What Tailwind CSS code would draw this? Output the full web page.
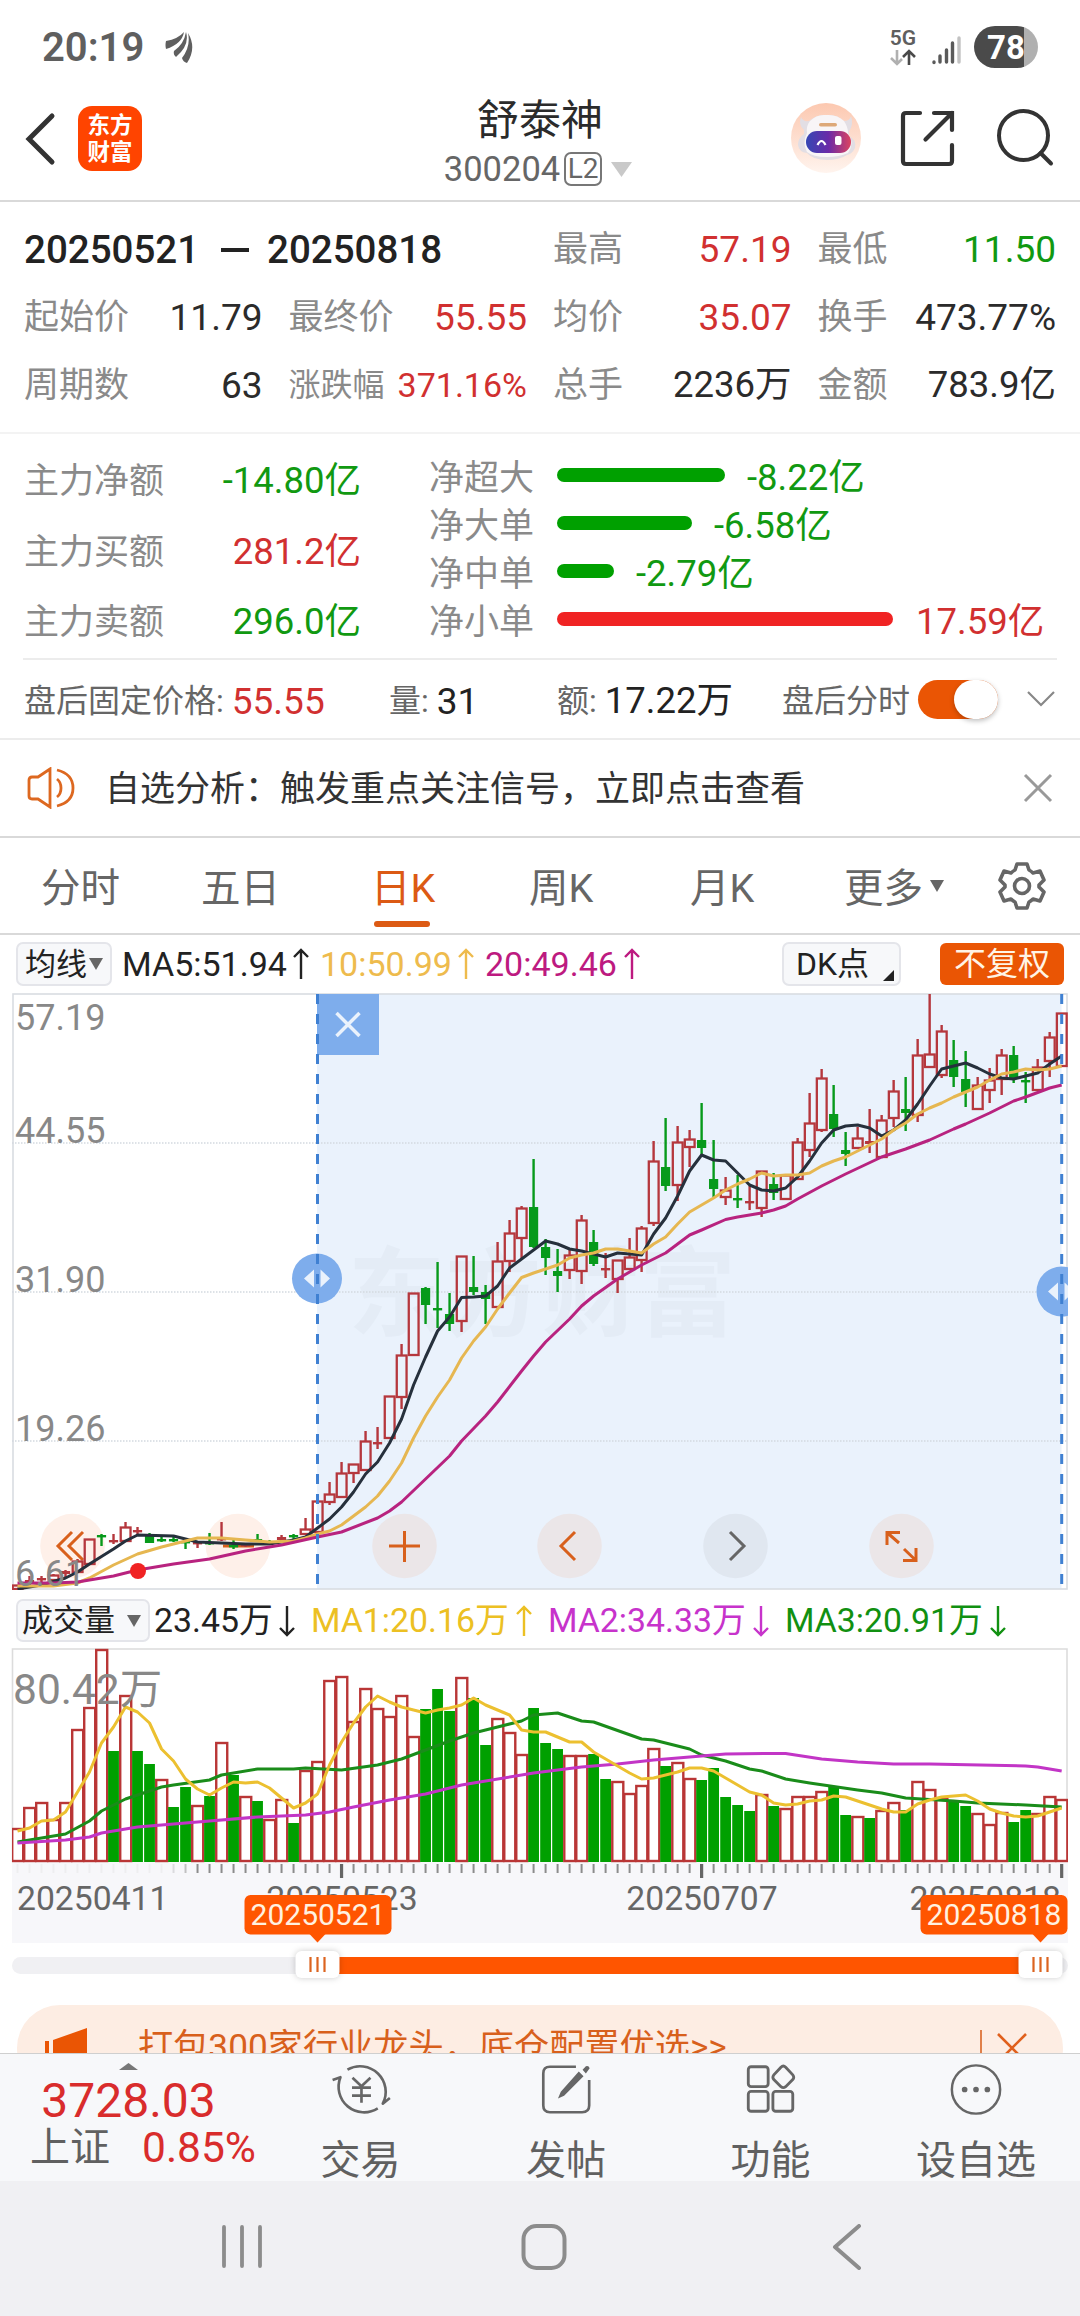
<!DOCTYPE html>
<html lang="zh-CN">
<head>
  <meta charset="UTF-8" />
  <meta name="viewport" content="width=device-width, initial-scale=1.0">
  <title>舒泰神 300204</title>
  <script src="https://cdn.jsdelivr.net/npm/@tailwindcss/browser@4"></script>
</head>
<body class="bg-white">
<div class="w-[1080px] h-[2316px] overflow-hidden flex flex-col bg-white text-[#2b2b2b] leading-none whitespace-nowrap font-[Roboto,'Noto_Sans_CJK_SC',sans-serif]">

  <!-- status bar -->
  <div class="h-[88px] shrink-0 flex items-center pl-[42px] pr-[42px] pt-[7px] text-[#5f5f5f]">
    <span class="text-[40px] font-semibold">20:19</span>
    <svg class="ml-[20px] w-[30px] h-[34px]" viewBox="0 0 30 34" fill="#5f5f5f"><path d="M2 10Q14 8 20 1Q18 13 2 18Q1 14 2 10ZM10 20Q20 13 22 1Q26 14 12 26Q9 24 10 20ZM18 27Q27 15 24 2Q33 17 23 32Q19 31 18 27Z"/></svg>
    <div class="ml-auto flex items-center">
      <div class="flex flex-col items-center w-[28px] -mt-[2px]">
        <span class="text-[21px] font-semibold">5G</span>
        <svg class="w-[28px] h-[17px]" viewBox="0 0 28 17" fill="none" stroke-width="2.600"><path d="M8 1V15M2 9L8 15L13 10" stroke="#b0b0b0"/><path d="M20 16V2M14 8L20 2L26 8" stroke="#4a4a4a"/></svg>
      </div>
      <svg class="ml-[14px] w-[30px] h-[30px] mt-[5px]" viewBox="0 0 30 30" stroke="#5a5a5a" stroke-width="3.400" stroke-linecap="round"><path d="M3 27V27.500M9 21V27M15.500 15V27M21.500 8V27"/><path d="M28 3V27" stroke="#c2c2c2"/></svg>
      <div class="ml-[13px] w-[64px] h-[42px] rounded-full flex items-center justify-center text-white text-[33px] font-bold bg-linear-to-r from-[#4a4a4a] from-78% to-[#b0b0b0] to-78% -mt-[1px]">78</div>
    </div>
  </div>

  <!-- title bar -->
  <div class="h-[114px] shrink-0 flex border-b-2 border-[#d9d9d9]">
    <div class="w-[400px] flex items-start pt-[18px] pl-[24px]">
      <svg class="w-[32px] h-[54px] mt-[6px]" viewBox="0 0 32 54" fill="none" stroke="#333" stroke-width="5" stroke-linecap="round"><path d="M28 4L5 27L28 50"/></svg>
      <div class="ml-[22px] w-[64px] h-[65px] rounded-[14px] bg-[#ff4400] text-white text-[22.500px] font-bold flex flex-col items-center justify-center gap-[5px]">
        <span>东方</span><span>财富</span>
      </div>
    </div>
    <div class="w-[280px] flex flex-col items-center pt-[12px]">
      <div class="text-[42px]">舒泰神</div>
      <div class="mt-[10px] flex items-center text-[34.500px] text-[#666] pr-[4px]">
        <span>300204</span>
        <span class="ml-[4px] w-[38px] h-[34px] rounded-[7px] border-2 border-[#777] text-[28px] flex items-center justify-center">L2</span>
        <svg class="ml-[9px] w-[21px] h-[15px]" viewBox="0 0 21 15"><path d="M0 0H21L10.500 15Z" fill="#c9c9c9"/></svg>
      </div>
    </div>
    <div class="w-[400px] flex items-start pt-[14px] pl-[111px]">
      <svg class="w-[70px] h-[70px] mt-px" viewBox="0 0 70 70">
        <defs>
          <linearGradient id="halo" x1="0" y1="0" x2="0" y2="1"><stop offset="0" stop-color="#fcc8b0"/><stop offset="1" stop-color="#fff4ee"/></linearGradient>
          <linearGradient id="visor"><stop offset="0" stop-color="#3547b4"/><stop offset=".5" stop-color="#6a2aa8"/><stop offset="1" stop-color="#dc4460"/></linearGradient>
        </defs>
        <circle cx="35" cy="35" r="35" fill="url(#halo)"/>
        <path d="M10 14Q12 19 18 18Q26 11 35 12Q46 11 53 18Q59 18 60 13Q63 22 58 28V33Q66 37 64 45Q61 51 56 52Q48 57 36 57Q22 57 16 50Q8 49 7 42Q7 35 13 31V27Q7 22 10 14Z" fill="#e2dee4"/>
        <path d="M19 18Q26 11 35 12Q46 11 53 18Q57 24 57 30Q64 40 57 50Q48 54 36 54Q22 54 16 49Q11 40 16 30Q15 23 19 18Z" fill="#f8f5f7"/>
        <rect x="28" y="20" width="18" height="3.600" rx="1.800" fill="#dda878"/>
        <rect x="15" y="28" width="45" height="22" rx="11" fill="url(#visor)"/>
        <path d="M26.500 42Q30.500 34 34.500 42" fill="none" stroke="#fff" stroke-width="2.200"/>
        <rect x="44" y="33" width="6.500" height="9" rx="2" fill="#fff"/>
      </svg>
      <svg class="ml-[38px] mt-[7px] w-[56px] h-[58px]" viewBox="0 0 56 58" fill="none" stroke="#333" stroke-width="4.200" stroke-linecap="round"><path d="M21 4H7Q4 4 4 7V52Q4 55 7 55H50Q53 55 53 52V36M35 4H53V21M53 4L26.500 30.500"/></svg>
      <svg class="ml-[41px] mt-[7px] w-[58px] h-[58px]" viewBox="0 0 58 58" fill="none" stroke="#333" stroke-width="4" stroke-linecap="round"><circle cx="27.500" cy="26.500" r="24.500"/><path d="M44.500 44L55 54.500"/></svg>
    </div>
  </div>

  <!-- range statistics -->
  <div class="h-[232px] shrink-0 border-b-2 border-[#f3f3f3] pl-[24px] pr-[24px] pt-[13px] grid grid-cols-4 grid-rows-[68px_68px_68px] content-start items-center gap-x-[26px] text-[35px] text-[#8a8a8a]">
    <div class="col-span-2 text-[38.500px] font-medium text-[#222] flex items-center pt-[2px]"><span>20250521</span><i class="w-[28px] h-[4px] bg-[#222] ml-[22px] mr-[18px]"></i><span>20250818</span></div>
    <div class="flex justify-between items-center"><span>最高</span><b class="font-normal text-[37px] text-[#d13030]">57.19</b></div>
    <div class="flex justify-between items-center"><span>最低</span><b class="font-normal text-[37px] text-[#119911]">11.50</b></div>
    <div class="flex justify-between items-center"><span>起始价</span><b class="font-normal text-[37px] text-[#2b2b2b]">11.79</b></div>
    <div class="flex justify-between items-center"><span>最终价</span><b class="font-normal text-[37px] text-[#d13030]">55.55</b></div>
    <div class="flex justify-between items-center"><span>均价</span><b class="font-normal text-[37px] text-[#d13030]">35.07</b></div>
    <div class="flex justify-between items-center"><span>换手</span><b class="font-normal text-[37px] text-[#2b2b2b]">473.77%</b></div>
    <div class="flex justify-between items-center"><span>周期数</span><b class="font-normal text-[37px] text-[#2b2b2b]">63</b></div>
    <div class="flex justify-between items-center"><span class="text-[32px]">涨跌幅</span><b class="font-normal text-[34px] text-[#d13030]">371.16%</b></div>
    <div class="flex justify-between items-center"><span>总手</span><b class="font-normal text-[36.500px] text-[#2b2b2b]">2236万</b></div>
    <div class="flex justify-between items-center"><span>金额</span><b class="font-normal text-[36.500px] text-[#2b2b2b]">783.9亿</b></div>
  </div>

  <!-- money flow -->
  <div class="h-[226px] shrink-0 mx-[23px] border-b-2 border-[#ececec] flex text-[35px] text-[#8a8a8a]">
    <div class="w-[338px] pl-px pt-[12px] flex flex-col">
      <div class="h-[71px] flex items-center justify-between"><span>主力净额</span><b class="font-normal text-[36.500px] text-[#119911]">-14.80亿</b></div>
      <div class="h-[71px] flex items-center justify-between"><span>主力买额</span><b class="font-normal text-[36.500px] text-[#d13030]">281.2亿</b></div>
      <div class="h-[71px] flex items-center justify-between"><span>主力卖额</span><b class="font-normal text-[36.500px] text-[#119911]">296.0亿</b></div>
    </div>
    <div class="ml-[68px] pt-[20px] flex flex-col">
      <div class="h-[48px] flex items-center"><span class="w-[128px]">净超大</span><i class="w-[168px] h-[14px] -mt-[7px] mr-[22px] rounded-full bg-[#00a000]"></i><b class="font-normal text-[36.500px] text-[#119911]">-8.22亿</b></div>
      <div class="h-[48px] flex items-center"><span class="w-[128px]">净大单</span><i class="w-[135px] h-[14px] -mt-[7px] mr-[22px] rounded-full bg-[#00a000]"></i><b class="font-normal text-[36.500px] text-[#119911]">-6.58亿</b></div>
      <div class="h-[48px] flex items-center"><span class="w-[128px]">净中单</span><i class="w-[57px] h-[14px] -mt-[7px] mr-[22px] rounded-full bg-[#00a000]"></i><b class="font-normal text-[36.500px] text-[#119911]">-2.79亿</b></div>
      <div class="h-[48px] flex items-center"><span class="w-[128px]">净小单</span><i class="w-[336px] h-[14px] -mt-[7px] mr-[23px] rounded-full bg-[#f02323]"></i><b class="font-normal text-[36.500px] text-[#d13030]">17.59亿</b></div>
    </div>
  </div>

  <!-- after-hours -->
  <div class="h-[80px] shrink-0 border-b-2 border-[#ececec] pl-[24px] flex items-center text-[32px] text-[#666]">
    <div class="w-[365px] pt-[4px] flex items-center gap-[8px]"><span>盘后固定价格:</span><b class="font-normal text-[37px] text-[#d13030]">55.55</b></div>
    <div class="w-[168px] pt-[4px] flex items-center gap-[8px]"><span>量:</span><b class="font-normal text-[37px] text-[#222]">31</b></div>
    <div class="w-[225px] pt-[4px] flex items-center gap-[8px]"><span>额:</span><b class="font-normal text-[36.500px] text-[#222]">17.22万</b></div>
    <span class="w-[136px] pt-[4px]">盘后分时</span>
    <div class="w-[80px] h-[39px] rounded-full bg-[#ea5504] flex justify-end"><i class="w-[44px] h-[39px] rounded-full bg-white shadow-[0_2px_5px_rgba(0,0,0,0.25)]"></i></div>
    <svg class="ml-[28px] w-[30px] h-[18px]" viewBox="0 0 30 18" fill="none" stroke="#888" stroke-width="2.200"><path d="M2 2L15 15L28 2"/></svg>
  </div>

  <!-- notice -->
  <div class="h-[98px] shrink-0 border-b-2 border-[#d9d9d9] pl-[26px] pr-[27px] flex items-center text-[35px] text-[#333]">
    <svg class="w-[50px] h-[42px]" viewBox="0 0 50 42" fill="none" stroke="#dd6820" stroke-width="2.800"><path d="M24 2L12 10H6Q3 10 3 13V29Q3 32 6 32H12L24 40ZM31 12Q35 15 35 21T31 30M31 3Q47 7 47 21T31 39"/></svg>
    <span class="ml-[29px] pt-[2px]">自选分析：触发重点关注信号，立即点击查看</span>
    <svg class="ml-auto w-[30px] h-[30px]" viewBox="0 0 30 30" stroke="#999" stroke-width="3"><path d="M2 2L28 28M28 2L2 28"/></svg>
  </div>

  <!-- period tabs -->
  <div class="h-[97px] shrink-0 border-b-2 border-[#d9d9d9] pl-[41px] flex items-center text-[39.500px] text-[#666]">
    <span class="w-[160px] pt-[7px]">分时</span>
    <span class="w-[170px] pt-[7px]">五日</span>
    <span class="w-[158px] h-full pt-[7px] flex items-center relative text-[#dc5a14]">日K<i class="absolute left-[3px] top-[83px] w-[56px] h-[6px] rounded-full bg-[#dc5a14]"></i></span>
    <span class="w-[161px] pt-[7px]">周K</span>
    <span class="w-[154px] pt-[7px]">月K</span>
    <span class="pt-[7px]">更多</span>
    <svg class="ml-[7px] w-[14px] h-[12px]" viewBox="0 0 14 12"><path d="M0 0H14L7 12Z" fill="#666"/></svg>
    <svg class="ml-[53px] w-[50px] h-[50px]" viewBox="0 0 50 50" fill="none" stroke="#666" stroke-width="3.600" stroke-linejoin="round"><path d="M20 3H30L32 9Q34 10 36 12L43 10L47 19L42 24V26L47 31L43 40L36 38Q34 40 32 41L30 47H20L18 41Q16 40 14 38L7 40L3 31L8 26V24L3 19L7 10L14 12Q16 10 18 9Z"/><circle cx="25" cy="25" r="7.500"/></svg>
  </div>

  <!-- moving averages legend -->
  <div class="h-[58px] shrink-0 pl-[16px] flex items-center text-[34px] text-[#222]">
    <div class="w-[96px] h-[44px] rounded-[7px] border-2 border-[#e4e5ea] bg-[#f7f8fa] flex items-center justify-center text-[31px]">均线<svg class="ml-[2px] w-[14px] h-[12px]" viewBox="0 0 14 12"><path d="M0 0H14L7 12Z" fill="#666"/></svg></div>
    <span class="ml-[10px] w-[170px]">MA5:51.94</span>
    <svg class="w-[18px] h-[32px]" viewBox="0 0 18 32" fill="none" stroke="#222" stroke-width="2.400"><path d="M9 31V2M2 9L9 2L16 9"/></svg>
    <span class="ml-[10px] w-[137px] text-[#eebb4d]">10:50.99</span>
    <svg class="w-[18px] h-[32px]" viewBox="0 0 18 32" fill="none" stroke="#eebb4d" stroke-width="2.400"><path d="M9 31V2M2 9L9 2L16 9"/></svg>
    <span class="ml-[10px] w-[138px] text-[#bd1a80]">20:49.46</span>
    <svg class="w-[18px] h-[32px]" viewBox="0 0 18 32" fill="none" stroke="#bd1a80" stroke-width="2.400"><path d="M9 31V2M2 9L9 2L16 9"/></svg>
    <div class="ml-[141px] w-[119px] h-[44px] rounded-[7px] border-2 border-[#e4e5ea] bg-[#f7f8fa] flex items-center pl-[12px] text-[32px]">DK点<svg class="ml-auto mr-[5px] mt-[22px] w-[11px] h-[11px]" viewBox="0 0 11 11"><path d="M11 0V11H0Z" fill="#222"/></svg></div>
    <div class="ml-[39px] w-[124px] h-[42px] rounded-[6px] bg-[#ea5504] text-[#fff4e6] text-[32px] flex items-center justify-center">不复权</div>
  </div>

  <!-- candlestick chart -->
  <svg id="kline" class="w-[1080px] h-[600px] shrink-0" viewBox="0 993 1080 600"></svg>

  <!-- volume legend -->
  <div class="h-[55px] shrink-0 pl-[16px] flex items-center text-[33.800px] text-[#222]">
    <div class="w-[134px] h-[43px] rounded-[7px] border-2 border-[#e4e5ea] bg-[#f7f8fa] flex items-center pl-[4px] text-[31px]">成交量<svg class="ml-[12px] w-[14px] h-[12px]" viewBox="0 0 14 12"><path d="M0 0H14L7 12Z" fill="#666"/></svg></div>
    <span class="ml-[4px] w-[124px]">23.45万</span>
    <svg class="w-[18px] h-[32px]" viewBox="0 0 18 32" fill="none" stroke="#222" stroke-width="2.400"><path d="M9 1V30M2 23L9 30L16 23"/></svg>
    <span class="ml-[15px] w-[204px] text-[#ecc023]">MA1:20.16万</span>
    <svg class="w-[18px] h-[32px]" viewBox="0 0 18 32" fill="none" stroke="#ecc023" stroke-width="2.400"><path d="M9 31V2M2 9L9 2L16 9"/></svg>
    <span class="ml-[15px] w-[204px] text-[#c733cb]">MA2:34.33万</span>
    <svg class="w-[18px] h-[32px]" viewBox="0 0 18 32" fill="none" stroke="#c733cb" stroke-width="2.400"><path d="M9 1V30M2 23L9 30L16 23"/></svg>
    <span class="ml-[15px] w-[204px] text-[#119011]">MA3:20.91万</span>
    <svg class="w-[18px] h-[32px]" viewBox="0 0 18 32" fill="none" stroke="#119011" stroke-width="2.400"><path d="M9 1V30M2 23L9 30L16 23"/></svg>
  </div>

  <!-- volume chart with time axis and range slider -->
  <svg id="volume" class="w-[1080px] h-[357px] shrink-0" viewBox="0 1648 1080 357"></svg>

  <!-- promo banner, cut by the bottom bar -->
  <div class="h-[48px] shrink-0 overflow-hidden px-[17px]">
    <div class="h-[86px] rounded-[43px] bg-[#fdede3] flex items-center pl-[27px] pr-[35px] text-[35.200px] text-[#d8601c]">
      <svg class="w-[44px] h-[44px] mt-[4px]" viewBox="0 0 44 44" fill="#ea5504"><path d="M1 13H5V32H1ZM9 12L43 0V44L9 32Z"/></svg>
      <span class="ml-[50px]">打包300家行业龙头，底仓配置优选&gt;&gt;</span>
      <i class="ml-auto w-[2px] h-[36px] bg-[#e0804a]"></i>
      <svg class="ml-[14px] w-[32px] h-[34px]" viewBox="0 0 32 34" stroke="#e0601c" stroke-width="2.600"><path d="M2 3L30 31M30 3L2 31"/></svg>
    </div>
  </div>

  <!-- bottom bar -->
  <div class="h-[128px] shrink-0 border-t border-[#cfcfcf] bg-[#f7f8fa] flex text-[40px] text-[#606060]">
    <div class="w-[257px] pt-[9px] flex flex-col items-center">
      <svg class="w-[19px] h-[7px]" viewBox="0 0 19 7"><path d="M0 7H19L9.500 0Z" fill="#777"/></svg>
      <div class="mt-[7px] text-[48px] text-[#d92c2c]">3728.03</div>
      <div class="mt-[2px] w-full pl-[30px] flex items-center">上证<span class="ml-[32px] text-[42.500px] text-[#d92c2c]">0.85%</span></div>
    </div>
    <div class="w-[207px] pt-[9px] flex flex-col items-center">
      <svg class="w-[62px] h-[56px]" viewBox="0 0 62 56" fill="none" stroke="#666" stroke-width="2.800" stroke-linejoin="round"><path d="M16.700 7A27 27 0 0 1 54 43L61.500 37M48.700 48A27 27 0 0 1 9.300 15L1 18"/><path d="M22 15.500L31.500 24.500L41 15.500M31.500 24.500V42M21.500 26H41.500M21.500 34.500H41.500"/></svg>
      <span class="mt-[25px]">交易</span>
    </div>
    <div class="w-[204px] pt-[9px] flex flex-col items-center">
      <svg class="w-[56px] h-[56px]" viewBox="0 0 56 56" fill="none" stroke="#666" stroke-width="2.800"><path d="M38.500 4H11Q4 4 4 11V45Q4 52 11 52H45Q52.500 52 52.500 45V18"/><path d="M41.500 9L46.500 14L26 34.500L19.500 37.500L22.500 30.500ZM45.500 7L49 3.500Q52 2.500 53 5.500L49 11Z" fill="#666" stroke="none"/></svg>
      <span class="mt-[25px]">发帖</span>
    </div>
    <div class="w-[205px] pt-[9px] flex flex-col items-center">
      <svg class="w-[56px] h-[56px]" viewBox="0 0 56 56" fill="none" stroke="#666" stroke-width="3"><rect x="4" y="4" width="21" height="21" rx="3"/><rect x="4" y="30" width="21" height="21" rx="3"/><rect x="30" y="30" width="21" height="21" rx="3"/><path d="M38.500 4.500Q41 2 43.500 4.500L51 12.500Q53 15 51 17.500L43.500 25Q41 27 38.500 25L31 17.500Q29 15 31 12.500Z"/></svg>
      <span class="mt-[25px]">功能</span>
    </div>
    <div class="w-[206px] pt-[9px] flex flex-col items-center">
      <svg class="w-[56px] h-[56px]" viewBox="0 0 56 56"><circle cx="28" cy="28" r="25.500" fill="none" stroke="#666" stroke-width="2.600"/><path d="M13 28a3 3 0 1 0 6 0a3 3 0 1 0 -6 0M25 28a3 3 0 1 0 6 0a3 3 0 1 0 -6 0M37 28a3 3 0 1 0 6 0a3 3 0 1 0 -6 0" fill="#666"/></svg>
      <span class="mt-[25px]">设自选</span>
    </div>
  </div>

  <!-- system navigation -->
  <div class="flex-1 bg-[#f0f0f3] flex items-start pt-[43px]">
    <svg class="ml-[221px] w-[42px] h-[46px]" viewBox="0 0 42 46" stroke="#8c8c8c" stroke-width="3.800" stroke-linecap="round"><path d="M3 3V42M21 3V42M39 3V42"/></svg>
    <svg class="ml-[258px] w-[46px] h-[46px]" viewBox="0 0 46 46" fill="none" stroke="#8c8c8c" stroke-width="4"><rect x="2.500" y="2" width="41" height="42" rx="13"/></svg>
    <svg class="ml-[264px] w-[32px] h-[46px]" viewBox="0 0 32 46" fill="none" stroke="#8c8c8c" stroke-width="4" stroke-linecap="round" stroke-linejoin="round"><path d="M28 2L4 23L28 44"/></svg>
  </div>
</div>

<script>
  const RED = "#b5373d", GREEN = "#079a1b";
  const x = i => 17.5 + 12.002 * i;

  // [up, bodyTop, bodyBottom, high, low]
  const candles = [
    [1,1585,1589,1585,1589],[1,1580,1583,1576,1586],[1,1578,1580,1576,1582],[1,1575,1580,1574,1580],[1,1571,1574,1570,1577],
    [1,1561,1572,1559,1573],[1,1539,1564,1539,1564],[0,1535,1537,1534,1546],[1,1540,1542,1534,1544],[1,1527,1541,1522,1541],
    [1,1530,1532,1527,1535],[0,1534,1543,1533,1543],[0,1539,1540,1537,1542],[0,1539,1540,1536,1542],[0,1541,1543,1540,1549],
    [1,1542,1543,1541,1548],[0,1542,1544,1533,1545],[1,1538,1539,1522,1541],[0,1545,1547,1540,1549],[1,1544,1546,1543,1547],
    [0,1539,1541,1534,1542],[0,1541,1543,1540,1545],[1,1537,1540,1535,1541],[0,1535,1537,1534,1540],[1,1529,1534,1518,1534],
    [1,1501,1532,1500,1534],[1,1494,1502,1482,1505],[1,1473,1497,1462,1498],[1,1464,1473,1464,1483],[1,1441,1470,1431,1471],
    [1,1442,1444,1427,1449],[1,1396,1438,1396,1438],[1,1355,1397,1344,1409],[1,1293,1355,1293,1355],[0,1288,1305,1287,1324],
    [0,1308,1309,1262,1328],[0,1314,1324,1293,1331],[1,1256,1321,1256,1332],[0,1287,1292,1256,1295],[0,1292,1299,1285,1324],
    [1,1261,1307,1242,1307],[1,1233,1261,1220,1272],[1,1208,1238,1206,1259],[0,1207,1247,1159,1248],[0,1247,1258,1239,1275],
    [0,1271,1276,1249,1292],[1,1255,1270,1249,1279],[1,1220,1271,1215,1284],[0,1242,1264,1230,1266],[1,1268,1269,1253,1278],
    [1,1260,1279,1260,1293],[1,1257,1269,1238,1269],[1,1228,1260,1226,1272],[1,1161,1223,1141,1226],[0,1167,1186,1118,1191],
    [1,1142,1185,1126,1201],[1,1139,1147,1130,1167],[0,1140,1148,1103,1155],[0,1179,1189,1140,1197],[1,1190,1197,1177,1205],
    [0,1198,1200,1175,1208],[1,1201,1202,1186,1210],[1,1171,1208,1171,1217],[0,1184,1193,1173,1200],[1,1175,1199,1175,1199],
    [1,1142,1179,1138,1179],[1,1123,1150,1093,1157],[1,1078,1130,1069,1132],[0,1114,1129,1085,1137],[0,1150,1154,1132,1166],
    [1,1138,1148,1127,1148],[1,1141,1144,1109,1153],[1,1120,1157,1115,1157],[1,1091,1118,1080,1127],[0,1109,1113,1077,1131],
    [1,1055,1115,1039,1122],[1,1054,1067,994,1067],[1,1031,1075,1025,1078],[0,1060,1077,1040,1087],[0,1079,1092,1051,1107],
    [1,1085,1109,1077,1109],[1,1080,1090,1068,1103],[1,1055,1079,1049,1095],[0,1055,1078,1046,1083],[0,1080,1082,1072,1103],
    [1,1067,1090,1059,1090],[1,1037,1061,1032,1077],[1,1013,1066,1013,1066]
  ];

  // [index, y] points of the averages
  const ma5 = [[0,1589],[2,1585],[4,1578],[5,1572],[6,1564],[8,1549],[9,1541],[10,1535],[13,1536],[15,1542],[19,1544],[21,1544],[23,1540],[24,1537],[25,1528],[26,1519],[27,1507],[28,1492],[29,1474],[30,1462],[31,1443],[32,1419],[33,1385],[34,1357],[35,1331],[36,1317],[37,1297.5],[38,1297],[39,1296],[40,1286],[41,1268],[42,1259],[43,1250],[44,1241],[45,1244],[46,1249],[47,1251],[48,1254],[49,1257],[50,1253],[51,1254],[52,1255],[53,1234],[54,1218],[55,1196],[56,1171],[57,1155],[58,1160],[59,1161],[60,1173],[61,1185],[62,1190],[63,1191],[64,1188],[65,1177],[66,1161],[67,1143],[68,1130],[69,1126],[70,1125],[71,1128],[72,1136],[73,1130],[74,1120],[75,1104],[76,1086],[77,1069],[78,1066],[79,1063],[80,1068],[81,1074],[82,1078],[83,1079],[84,1076],[85,1073],[86,1064],[87,1056]];
  const ma10 = [[0,1586],[3,1586],[5,1583],[6,1578],[8,1565],[10,1554],[12,1547],[13,1544],[15,1538],[17,1538],[19,1540],[21,1542],[23,1541],[24,1538],[25,1534],[26,1531],[27,1525],[28,1516],[29,1507],[30,1496],[31,1481],[32,1463],[33,1438],[34,1416],[35,1397],[36,1380],[37,1358],[38,1341],[39,1327],[40,1309],[41,1293],[42,1277.5],[43,1273],[44,1269],[45,1265],[46,1258],[47,1255],[48,1253],[49,1249],[50,1249],[51,1251],[52,1253],[53,1244],[54,1237],[55,1224],[56,1212],[57,1205],[58,1198],[59,1190],[60,1184],[61,1179],[62,1173],[63,1176],[64,1175],[65,1175],[66,1173],[67,1166],[68,1161],[69,1157],[70,1151],[71,1145],[72,1139],[73,1130],[74,1123],[75,1114],[76,1108],[77,1103],[78,1097],[79,1092],[80,1087],[81,1080],[82,1074],[83,1072],[84,1069],[85,1070],[86,1069],[87,1066]];
  const ma20 = [[0,1583],[3,1583],[5,1582],[8,1576],[10,1570],[13,1564],[16,1559],[19,1551],[22,1545],[25,1537],[27,1532],[30,1518],[31,1511],[32,1502],[34,1479],[36,1456],[37,1441],[39,1416],[40,1402],[42,1371],[43,1356],[44,1342],[46,1319],[47,1306],[48,1296],[50,1279],[52,1265],[54,1253],[55,1244],[56,1235],[57,1230],[59,1219.5],[60,1217],[62,1213],[63,1210],[64,1206],[65,1199],[67,1186],[69,1174],[72,1157],[74,1149],[76,1140],[78,1129],[79,1124],[81,1113],[83,1101],[84,1097],[86,1088],[87,1085]];

  // r = rising, g = falling, with the y of the bar's top
  const volumes = "r1829 r1808 r1803 r1820 r1803 r1730 r1708 r1650 g1751 r1696 g1751 g1764 r1780 g1807 g1787 r1806 g1796 r1743 g1775 r1797 g1801 r1820 r1800 g1823 r1771 r1762 r1681 r1677 r1722 r1689 r1709 r1717 r1696 r1737 g1709 g1689 g1711 r1678 g1698 g1745 r1719 r1733 r1755 g1708 g1743 g1749 r1756 r1756 g1754 g1779 r1782 r1794 r1786 r1749 g1766 r1763 r1779 g1780 g1768 g1797 g1805 g1811 r1795 g1806 r1809 r1797 r1797 r1792 g1786 g1815 r1817 g1818 r1811 r1803 g1810 r1782 r1790 r1799 g1800 g1806 r1814 r1825 r1813 g1822 g1810 r1814 r1797 r1800".split(" ");
  const vol1 = [[0,1831],[1,1828],[2,1821],[3,1820],[4,1812],[5,1792],[6,1772],[7,1743],[8,1727],[9,1707],[10,1712],[11,1723],[12,1749],[13,1761],[14,1779],[15,1789],[16,1795],[17,1788],[18,1782],[19,1783],[20,1782],[21,1788],[22,1798],[23,1808],[24,1803],[25,1794],[26,1765],[27,1742],[28,1723],[29,1707],[30,1696],[31,1702],[32,1707],[33,1710],[34,1713],[35,1710],[36,1708],[37,1705],[38,1698],[39,1705],[40,1710],[41,1715],[42,1730],[43,1732],[44,1732],[45,1737],[46,1742],[47,1742],[48,1752],[50,1766],[51,1773],[52,1779],[53,1778],[54,1775],[55,1772],[56,1768],[57,1768],[58,1771],[59,1778],[60,1785],[61,1792],[62,1795],[63,1803],[64,1805],[65,1804],[66,1801],[67,1800],[68,1796],[69,1797],[70,1801],[72,1809],[73,1812],[74,1812],[75,1804],[76,1800],[77,1797],[78,1796],[79,1795],[80,1801],[81,1809],[82,1813],[83,1816],[84,1817],[85,1816],[86,1812],[87,1808]];
  const vol2 = [[0,1843],[4,1840],[6,1837],[7,1833],[10,1827],[13,1824],[16,1821],[20,1817],[24,1815],[26,1812],[28,1807],[31,1800],[34,1794],[37,1785],[38,1783],[43,1773],[47,1767],[50,1764],[53,1760],[56,1757],[59,1754],[63,1753.5],[64,1753.5],[67,1759],[70,1762],[73,1764],[76,1764],[84,1766],[85,1767],[87,1771]];
  const vol3 = [[0,1842],[4,1834],[6,1821],[7,1811],[8,1805],[9,1799],[11,1791],[12,1787],[13,1785],[16,1780],[17,1775],[20,1769],[23,1769],[24,1768],[27,1770],[30,1765],[32,1759],[34,1750],[36,1741],[38,1733],[40,1727],[42,1721],[43,1715],[45,1713],[47,1721],[48,1722],[52,1739],[53,1740],[56,1749],[57,1755],[59,1761],[61,1769],[62,1771],[64,1779],[66,1783],[70,1790],[72,1793],[74,1798],[78,1801],[80,1803],[84,1805],[87,1807]];

  const line = (pts, color) =>
    `<polyline points="${pts.map(([i, y]) => x(i) + "," + y).join(" ")}" fill="none" stroke="${color}" stroke-width="3" stroke-linejoin="round"/>`;

  function drawKline() {
    let s = `<defs><clipPath id="plot"><rect x="12" y="994" width="1056" height="596"/></clipPath></defs>`;
    s += `<rect x="317" y="994" width="744.5" height="595" fill="#eaf2fc"/>`;
    s += `<text x="348" y="1328" font-size="97" font-weight="700" fill="#e4ecf6">东方财富</text>`;
    s += `<rect x="13" y="994" width="1054" height="595" fill="none" stroke="#d9dde2" stroke-width="1.6"/>`;
    for (const y of [1143, 1292, 1441])
      s += `<path d="M12 ${y}H1067" stroke="#d3d9e0" stroke-width="1.6" stroke-dasharray="1.5 1.5"/>`;

    // round tool buttons
    [[72.5, "#fef0e9"], [238, "#fef0e9"], [404.5, "#ebe6e8"], [569.5, "#ebe6e8"], [735.5, "#e0e7f0"], [901.5, "#ebe6e8"]]
      .forEach(([cx, c]) => s += `<circle cx="${cx}" cy="1546" r="32.300" fill="${c}"/>`);
    s += `<g fill="none" stroke="#d8601c" stroke-width="3">
      <path d="M72 1532L58 1546L72 1560M83 1532L69 1546L83 1560"/>
      <path d="M223 1546H254M389 1546H420M404.500 1531V1562"/>
      <path d="M575 1532L561 1546L575 1560"/>
      <path d="M900 1532.500H887V1545M887 1532.500L899 1543M903 1560.500H916V1548M916 1560.500L904 1549"/>
      <path d="M730 1532L744 1546L730 1560" stroke="#666"/></g>`;

    s += `<g clip-path="url(#plot)">`;
    candles.forEach(([up, t, b, h, l], i) => {
      const c = up ? RED : GREEN, cx = x(i);
      if (up && b - t > 3) {
        s += `<path d="M${cx} ${h}V${t}M${cx} ${b}V${l}" stroke="${c}" stroke-width="2.4"/>`;
        s += `<rect x="${cx - 4.8}" y="${t + .5}" width="9.800" height="${b - t - .5}" fill="none" stroke="${c}" stroke-width="2.3"/>`;
      } else {
        s += `<path d="M${cx} ${h}V${l}" stroke="${c}" stroke-width="2.4"/>`;
        s += `<rect x="${cx - 4.6}" y="${t}" width="9.200" height="${Math.max(b - t, 2.4)}" fill="${c}"/>`;
      }
    });
    s += line(ma5, "#26303c") + line(ma10, "#e6b751") + line(ma20, "#b8237f") + `</g>`;
    s += `<circle cx="138" cy="1571" r="8" fill="#f02323"/>`;

    s += `<g font-size="36" fill="#888">
      <text x="15" y="1030">57.19</text><text x="15" y="1143">44.55</text><text x="15" y="1292">31.90</text>
      <text x="15" y="1441">19.26</text><text x="15" y="1586">6.61</text></g>`;

    // selection handles
    s += `<rect x="317" y="994" width="62" height="61" fill="#7eadec"/><path d="M336.500 1013L359.500 1036M359.500 1013L336.500 1036" stroke="#eaf2fc" stroke-width="3.500"/>`;
    s += `<g clip-path="url(#plot)"><circle cx="317" cy="1278.500" r="25" fill="#7eadec"/><path d="M304 1278.500L314 1269.500V1287.500ZM330 1278.500L320.500 1269.500V1287.500Z" fill="#eaf2fc"/>
      <circle cx="1061.500" cy="1291.500" r="25" fill="#7eadec"/><path d="M1048 1291.500L1058 1282.500V1300.500ZM1074 1291.500L1064.500 1282.500V1300.500Z" fill="#eaf2fc"/></g>`;
    s += `<path d="M317.500 994V1589M1061.700 994V1589" stroke="#3f80d2" stroke-width="3" stroke-dasharray="10 10"/>`;
    document.getElementById("kline").innerHTML = s;
  }

  function drawVolume() {
    let s = `<defs><clipPath id="volPlot"><rect x="12" y="1648" width="1056" height="215"/></clipPath></defs>`;
    s += `<rect x="12" y="1862" width="1056" height="81" fill="#f7f7fa"/>`;
    s += `<path d="M12.500 1862V1649H1067V1862" fill="none" stroke="#dcdcdc" stroke-width="1.6"/><g clip-path="url(#volPlot)">`;
    volumes.forEach((v, i) => {
      const t = +v.slice(1), cx = x(i);
      s += v[0] === "g"
        ? `<rect x="${cx - 5.4}" y="${t}" width="10.800" height="${1862 - t}" fill="#00a000"/>`
        : `<rect x="${cx - 5.3}" y="${t}" width="11" height="${1861 - t}" fill="#fff" stroke="#b93636" stroke-width="2.4"/>`;
    });
    s += line(vol3, "#1a8c1a") + line(vol2, "#c235c6") + line(vol1, "#ecc030") + `</g>`;
    s += `<text x="13" y="1704" font-size="42.500" fill="#888">80.42万</text>`;

    for (let i = 0; i < 88; i++) {
      const major = i % 30 === 27;
      const op = i < 13 ? 0.08 : i === 13 ? 0.25 : i === 14 ? 0.5 : 1;
      s += `<path d="M${x(i)} 1864V${major ? 1878 : 1873}" stroke="${major ? "#666" : "#8c8c8c"}" stroke-width="${major ? 3.2 : 2}" opacity="${op}"/>`;
    }
    s += `<g font-size="33.700" fill="#666"><text x="17" y="1910">20250411</text><text x="342" y="1910" text-anchor="middle">20250523</text>
      <text x="702" y="1910" text-anchor="middle">20250707</text><text x="1061" y="1910" text-anchor="end">20250818</text></g>`;

    // slider
    s += `<rect x="12" y="1957" width="1056" height="17" rx="8.500" fill="#f0f0f3"/><rect x="318" y="1957" width="723" height="17" fill="#ff5500"/>`;
    [[317.5, 318, "20250521"], [1040.500, 994, "20250818"]].forEach(([cx, mid, label]) => {
      s += `<rect x="${mid - 73.5}" y="1895" width="147" height="39.500" rx="6" fill="#ff5500"/><path d="M${cx - 8} 1934H${cx + 8}L${cx} 1942.500Z" fill="#ff5500"/>`;
      s += `<text x="${mid}" y="1925" text-anchor="middle" font-size="30" fill="#fff1e0">${label}</text>`;
      s += `<rect x="${cx - 22}" y="1951" width="44" height="27" rx="6" fill="#fff" style="filter:drop-shadow(0 0 3px rgba(0,0,0,.2))"/>`;
      s += `<path d="M${cx - 7} 1957V1972M${cx} 1957V1972M${cx + 7} 1957V1972" stroke="#dc6420" stroke-width="2.2"/>`;
    });
    document.getElementById("volume").innerHTML = s;
  }

  drawKline();
  drawVolume();
</script>
</body>
</html>
